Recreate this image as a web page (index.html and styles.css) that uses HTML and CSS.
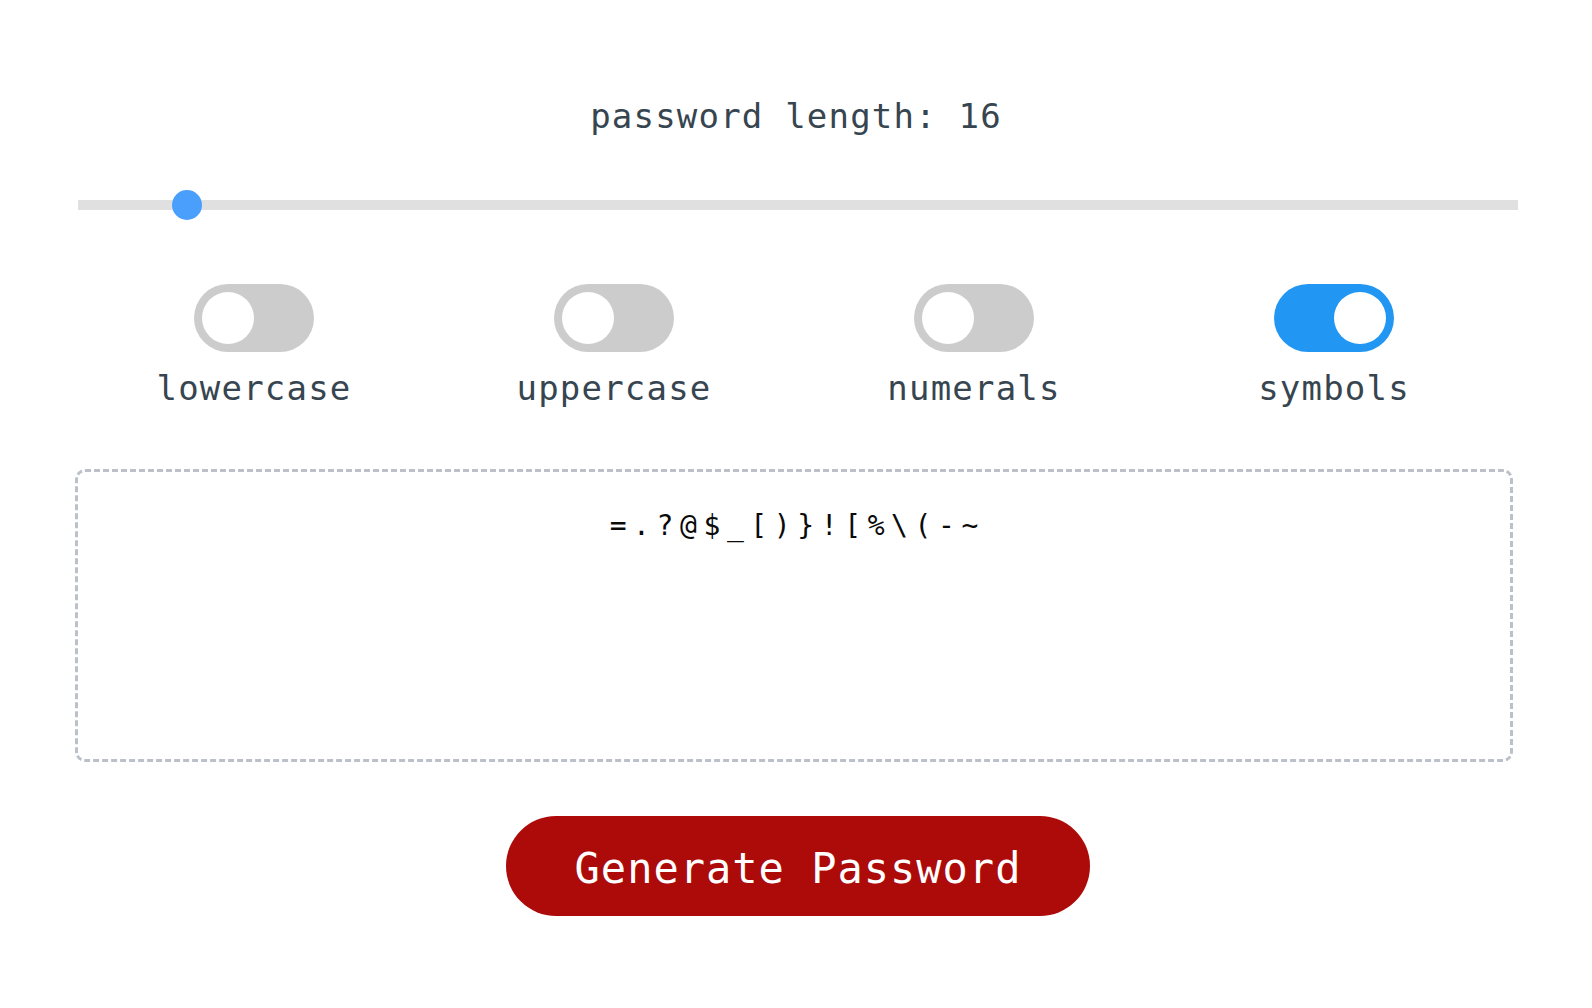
FILE: index.html
```html
<!DOCTYPE html>
<html lang="en">
<head>
<meta charset="utf-8">
<title>Password Generator</title>
<link rel="stylesheet" href="styles.css">
</head>
<body>
<main class="app">
  <h1 class="length-label">password length: 16</h1>

  <div class="slider">
    <div class="slider-track"></div>
    <div class="slider-thumb" style="left: calc((100% - 30px) * 0.0667);"></div>
  </div>

  <div class="options">
    <div class="option">
      <div class="toggle"><span class="knob"></span></div>
      <span class="option-label">lowercase</span>
    </div>
    <div class="option">
      <div class="toggle"><span class="knob"></span></div>
      <span class="option-label">uppercase</span>
    </div>
    <div class="option">
      <div class="toggle"><span class="knob"></span></div>
      <span class="option-label">numerals</span>
    </div>
    <div class="option">
      <div class="toggle toggle-on"><span class="knob"></span></div>
      <span class="option-label">symbols</span>
    </div>
  </div>

  <div class="output">=.?@$_[)}![%\(-~</div>

  <div class="actions">
    <button class="generate" type="button">Generate Password</button>
  </div>
</main>
</body>
</html>
```

FILE: styles.css
```css
* {
  box-sizing: border-box;
}

html, body {
  margin: 0;
  padding: 0;
  background: #ffffff;
}

body {
  font-family: "DejaVu Sans Mono", "Liberation Mono", monospace;
  color: #36454f;
}

.app {
  width: 1440px;
  margin: 0 auto;
  padding-top: 95px;
}

.length-label {
  margin: 0;
  font-size: 34px;
  font-weight: normal;
  letter-spacing: 1.2px;
  line-height: 42px;
  text-align: center;
  color: #36454f;
}

.slider {
  position: relative;
  height: 30px;
  margin-top: 53px;
  margin-left: 2px;
  margin-right: -2px;
  display: flex;
  align-items: center;
}

.slider-track {
  width: 100%;
  height: 10px;
  background: #e0e0e0;
}

.slider-thumb {
  position: absolute;
  top: 0;
  width: 30px;
  height: 30px;
  border-radius: 50%;
  background: #4a9ffc;
}

.options {
  display: grid;
  grid-template-columns: repeat(4, 1fr);
  margin-top: 64px;
  margin-left: -2px;
  margin-right: 2px;
}

.option {
  display: flex;
  flex-direction: column;
  align-items: center;
  gap: 15px;
}

.toggle {
  width: 120px;
  height: 68px;
  border-radius: 34px;
  background: #cccccc;
  padding: 8px;
  display: flex;
  justify-content: flex-start;
}

.toggle-on {
  background: #2196f3;
  justify-content: flex-end;
}

.knob {
  display: block;
  width: 52px;
  height: 52px;
  border-radius: 50%;
  background: #ffffff;
}

.option-label {
  font-size: 34px;
  letter-spacing: 1.2px;
  line-height: 42px;
  color: #36454f;
}

.output {
  margin-top: 60px;
  margin-left: -1px;
  width: 1438px;
  height: 293px;
  border: 3px dashed #bcc1c9;
  border-radius: 10px;
  padding-top: 38px;
  font-size: 28px;
  font-weight: normal;
  line-height: 32px;
  letter-spacing: 6.6px;
  text-indent: 6.6px;
  text-align: center;
  color: #0a0a0a;
}

.actions {
  display: flex;
  justify-content: center;
  margin-top: 54px;
  padding-left: 4px;
}

.generate {
  width: 584px;
  height: 100px;
  border: none;
  border-radius: 50px;
  background: #ad0a0a;
  color: #ffffff;
  font-family: "DejaVu Sans Mono", "Liberation Mono", monospace;
  font-size: 42px;
  letter-spacing: 1px;
  line-height: 94px;
  padding: 6px 0 0 0;
  cursor: pointer;
}
```
